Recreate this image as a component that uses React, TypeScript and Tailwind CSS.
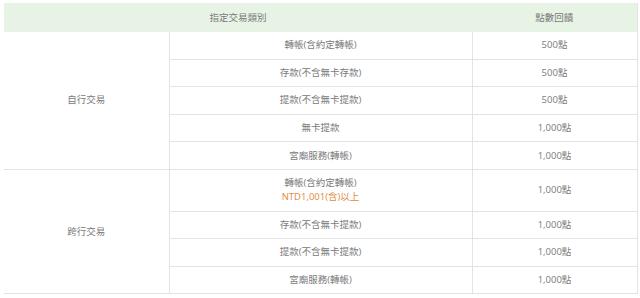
import React from 'react';

type Item = { name: string; note?: string; points: string };

const groups: { label: string; items: Item[] }[] = [
  {
    label: '自行交易',
    items: [
      { name: '轉帳(含約定轉帳)', points: '500點' },
      { name: '存款(不含無卡存款)', points: '500點' },
      { name: '提款(不含無卡提款)', points: '500點' },
      { name: '無卡提款', points: '1,000點' },
      { name: '宮廟服務(轉帳)', points: '1,000點' },
    ],
  },
  {
    label: '跨行交易',
    items: [
      { name: '轉帳(含約定轉帳)', note: 'NTD1,001(含)以上', points: '1,000點' },
      { name: '存款(不含無卡提款)', points: '1,000點' },
      { name: '提款(不含無卡提款)', points: '1,000點' },
      { name: '宮廟服務(轉帳)', points: '1,000點' },
    ],
  },
];

export default function App() {
  return (
    <div
      className="w-[640px] h-[298px] bg-white pl-[4px] pr-[3px] pt-[3px] text-[#7a7a7a] text-[9.5px] leading-[14px]"
      style={{ fontFamily: '"Open Sans", "Noto Sans CJK TC", sans-serif' }}
    >
      <table className="w-[633px] table-fixed border-collapse border-r border-[#e3e3e3] text-center">
        <colgroup>
          <col className="w-[165px]" />
          <col className="w-[303px]" />
          <col className="w-[165px]" />
        </colgroup>
        <thead>
          <tr className="bg-[#e7f3e5]">
            <th colSpan={2} className="py-[7.5px] font-normal">指定交易類別</th>
            <th className="py-[7.5px] font-normal">點數回饋</th>
          </tr>
        </thead>
        <tbody>
          {groups.map((g) =>
            g.items.map((item, i) => (
              <tr key={g.label + i}>
                {i === 0 && (
                  <td rowSpan={g.items.length} className="border-b border-[#e3e3e3] align-middle">
                    {g.label}
                  </td>
                )}
                <td className="border-l border-b border-[#e3e3e3] py-[6.3px]">
                  <div>{item.name}</div>
                  {item.note ? <div className="text-[#e08a3e]">{item.note}</div> : null}
                </td>
                <td className="border-l border-b border-[#e3e3e3] py-[6.3px]">{item.points}</td>
              </tr>
            ))
          )}
        </tbody>
      </table>
    </div>
  );
}
